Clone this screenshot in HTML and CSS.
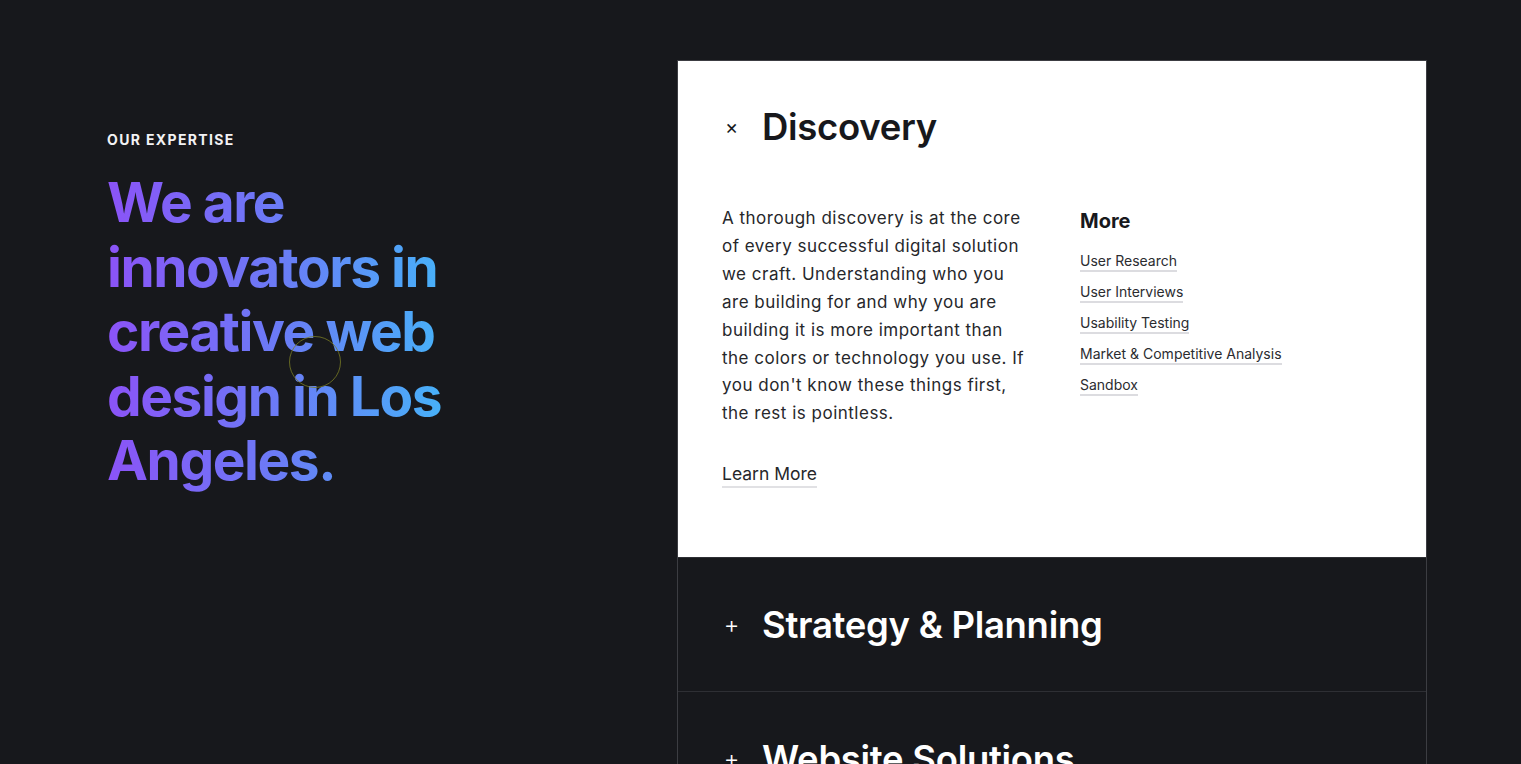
FILE: index.html
```html
<!DOCTYPE html>
<html lang="en">
<head>
<meta charset="utf-8">
<title>Our Expertise</title>
<link rel="stylesheet" href="styles.css">
</head>
<body>
<main class="page">
  <section class="intro">
    <p class="eyebrow">OUR EXPERTISE</p>
    <h1 class="headline">We are innovators in creative web design in Los Angeles.</h1>
  </section>
  <section class="accordion">
    <div class="item open">
      <div class="item-head">
        <span class="toggle">×</span>
        <h2 class="item-title">Discovery</h2>
      </div>
      <div class="item-body">
        <div class="desc">
          <p>A thorough discovery is at the core of every successful digital solution we craft. Understanding who you are building for and why you are building it is more important than the colors or technology you use. If you don't know these things first, the rest is pointless.</p>
          <a class="learn" href="#">Learn More</a>
        </div>
        <div class="more">
          <h3 class="more-title">More</h3>
          <ul class="links">
            <li><a href="#">User Research</a></li>
            <li><a href="#">User Interviews</a></li>
            <li><a href="#">Usability Testing</a></li>
            <li><a href="#">Market &amp; Competitive Analysis</a></li>
            <li><a href="#">Sandbox</a></li>
          </ul>
        </div>
      </div>
    </div>
    <div class="item closed">
      <div class="item-head">
        <span class="toggle plus">+</span>
        <h2 class="item-title">Strategy &amp; Planning</h2>
      </div>
    </div>
    <div class="item closed">
      <div class="item-head">
        <span class="toggle plus">+</span>
        <h2 class="item-title">Website Solutions</h2>
      </div>
    </div>
  </section>
  <div class="cursor-ring"></div>
</main>
</body>
</html>
```

FILE: styles.css
```css
* { box-sizing: border-box; }
html, body {
  margin: 0;
  padding: 0;
  background: #17181c;
  height: 100%;
  overflow: hidden;
}
body {
  font-family: Inter, "Noto Sans", sans-serif;
  color: #fff;
}
.page {
  position: relative;
  display: flex;
  padding: 60px 94px 0 107px;
}
.intro {
  width: 570px;
  flex: none;
  padding-top: 71px;
}
.eyebrow {
  margin: 0;
  font-size: 14px;
  font-weight: 700;
  letter-spacing: 1.35px;
  line-height: 18px;
  color: #f2f2f4;
}
.headline {
  margin: 21px 0 0;
  max-width: 350px;
  font-size: 55px;
  line-height: 64.5px;
  font-weight: 700;
  letter-spacing: -1.45px;
  background: linear-gradient(90deg, #8b53f7 0%, #6a7cf6 50%, #44b6f9 100%);
  -webkit-background-clip: text;
  background-clip: text;
  color: transparent;
}
.accordion {
  flex: 1;
  border-left: 1px solid #3c3d42;
  border-right: 1px solid #3c3d42;
  border-top: 1px solid #3c3d42;
  height: 720px;
}
.item {
  border-bottom: 1px solid #2e2f34;
}
.item.open {
  background: #fff;
  color: #17181c;
  padding: 43px 44px 69px 45px;
}
.item-head {
  display: flex;
  align-items: center;
  gap: 22px;
}
.toggle {
  width: 17px;
  text-align: center;
  font-size: 20px;
  line-height: 20px;
  font-weight: 400;
}
.toggle.plus {
  font-size: 24px;
  font-weight: 300;
}
.item-title {
  margin: 0;
  font-size: 36.5px;
  line-height: 46px;
  font-weight: 600;
  letter-spacing: -0.3px;
}
.item.closed {
  height: 134px;
  padding: 0 44px 0 45px;
  display: flex;
  align-items: center;
}
.item-body {
  display: grid;
  grid-template-columns: 310px 1fr;
  column-gap: 48px;
  margin-top: 55px;
  margin-left: -1px;
}
.desc p {
  margin: 0;
  font-size: 17px;
  line-height: 27.9px;
  letter-spacing: 0.5px;
  color: #26272b;
}
.learn {
  display: inline-block;
  margin-top: 34px;
  font-size: 17.5px;
  line-height: 24px;
  color: #26272b;
  text-decoration: none;
  border-bottom: 2px solid #e1e1e4;
}
.more-title {
  margin: 3px 0 0;
  font-size: 20px;
  line-height: 26px;
  font-weight: 700;
  color: #17181c;
}
.links {
  list-style: none;
  margin: 16px 0 0;
  padding: 0;
}
.links li {
  height: 31px;
}
.links a {
  display: inline-block;
  font-size: 14px;
  line-height: 18px;
  color: #2b2c30;
  text-decoration: none;
  border-bottom: 2px solid #dcdce0;
}
.cursor-ring {
  position: absolute;
  left: 289px;
  top: 336px;
  width: 52px;
  height: 52px;
  border-radius: 50%;
  border: 1px solid rgba(120, 122, 36, 0.8);
  pointer-events: none;
}
```
